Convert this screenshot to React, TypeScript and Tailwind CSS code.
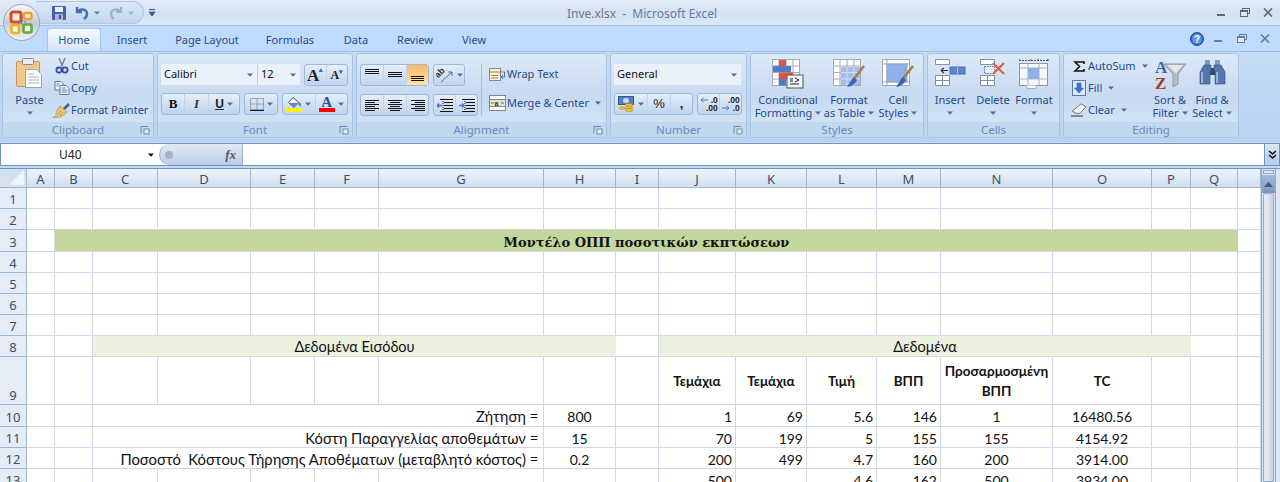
import React from "react";

const Caret = ({ c = "#4d6f9f", cls = "" }: { c?: string; cls?: string }) => (
  <svg width="6" height="4" viewBox="0 0 6 4" className={cls}><path d="M0 0.5h6L3 3.8z" fill={c} /></svg>
);

const BtnGroup = ({ w, children }: { w: string; children: React.ReactNode }) => (
  <div className={`${w} h-[22px] flex items-center rounded-[3px] border border-[#9fbad9] bg-gradient-to-b from-[#e4eefb] to-[#c0d4ec]`}>{children}</div>
);

const Cellb = ({ w, children, active }: { w: string; children: React.ReactNode; active?: boolean }) => (
  <div className={`${w} h-full flex items-center justify-center gap-[3px] border-r border-[#c3d3e7] last:border-r-0 ${active ? "bg-gradient-to-b from-[#f9b96b] to-[#ffe6a5]" : ""}`}>{children}</div>
);

const Launcher = () => (
  <svg width="10" height="10" viewBox="0 0 10 10" className="mr-[3px]">
    <path d="M1 8.5V1.5h7" fill="none" stroke="#6d89ad" />
    <rect x="4" y="4" width="5" height="5" fill="#e6eef9" stroke="#6d89ad" />
  </svg>
);

const Group = ({ w, label, launcher, children, cls = "" }: { w: string; label: string; launcher?: boolean; children: React.ReactNode; cls?: string }) => (
  <div className={`${w} h-[85px] rounded-[3px] border border-[#a9c3e2] flex flex-col overflow-hidden bg-gradient-to-b from-[#dde9f8] via-[#c7daf1] to-[#d9e7f8]`}>
    <div className={`h-[68px] ${cls}`}>{children}</div>
    <div className="h-[15px] bg-[#c1d8f0] flex items-center relative">
      <div className="flex-1 text-center text-[11.5px] leading-[15px] text-[#6c8db8]">{label}</div>
      {launcher && <div className="absolute right-0 top-[3px]"><Launcher /></div>}
    </div>
  </div>
);

const Big = ({ w, icon, l1, l2, arrow = true }: { w: string; icon: React.ReactNode; l1: string; l2?: string; arrow?: boolean }) => (
  <div className={`${w} flex flex-col items-center pt-[5px] text-[11px] leading-[13px] text-[#1f4a8c] whitespace-nowrap`}>
    <div className="h-[32px] flex items-start justify-center">{icon}</div>
    <div className="mt-[2px]">{l1}</div>
    <div className="flex items-center justify-center gap-[3px] h-[13px]">
      {l2 && <span>{l2}</span>}
      {arrow && <Caret />}
    </div>
  </div>
);

const Small = ({ icon, text, caret, cls = "" }: { icon: React.ReactNode; text: string; caret?: boolean; cls?: string }) => (
  <div className={`h-[22px] flex items-center text-[11px] text-[#1f4a8c] whitespace-nowrap ${cls}`}>
    <div className="w-[19px] flex justify-center">{icon}</div>
    <span>{text}</span>
    {caret && <Caret cls="ml-[6px]" />}
  </div>
);

const Lines = ({ ys, widths, x }: { ys: number[]; widths: number[]; x: number[] }) => (
  <svg width="16" height="14" viewBox="0 0 16 14">
    {ys.map((y, i) => <rect key={i} x={x[i]} y={y} width={widths[i]} height="1" fill="#111" />)}
  </svg>
);

const CutIcon = () => (
  <svg width="14" height="16" viewBox="0 0 14 16">
    <path d="M4 0l3.5 8.5M10 0L6.5 8.5" stroke="#7d8aa0" strokeWidth="1.6" fill="none" />
    <circle cx="4" cy="12" r="2.6" fill="none" stroke="#2c4f96" strokeWidth="1.7" />
    <circle cx="10" cy="12" r="2.6" fill="none" stroke="#2c4f96" strokeWidth="1.7" />
  </svg>
);
const CopyIcon = () => (
  <svg width="16" height="14" viewBox="0 0 16 14">
    <path d="M1 .5h6l2 2V9H1z" fill="#f3f6fb" stroke="#5c77a5" />
    <path d="M6 4.5h6l3 3v6H6z" fill="#fff" stroke="#5c77a5" />
    <path d="M7.5 7h4M7.5 9h6M7.5 11h6M2.5 3h3M2.5 5h2" stroke="#5c77a5" />
  </svg>
);
const BrushIcon = () => (
  <svg width="17" height="15" viewBox="0 0 17 15">
    <path d="M10 5l5-5 2 2-5 5z" fill="#48618f" />
    <path d="M7 3l7 6-4 3.5c-3 2-6 2.5-10 2 3-1 3.5-2 3-3.5C3 9 4.500 6 7 3z" fill="#e6c977" stroke="#a5872e" strokeWidth=".6" />
    <path d="M4.500 12L8 7.500M7 13l3-4" stroke="#a5872e" strokeWidth=".7" />
  </svg>
);
const PasteIcon = () => (
  <svg width="27" height="31" viewBox="0 0 27 31">
    <rect x=".5" y="3.500" width="23" height="25" rx="1.500" fill="#f0c887" stroke="#c2965a" />
    <rect x="6.500" y=".5" width="11" height="6" rx="1" fill="#e8ebef" stroke="#848b96" />
    <path d="M9.500 11.500h11l5 5v13h-16z" fill="#fff" stroke="#94a3b8" />
    <path d="M12 16h6M12 19h11M12 22h11M12 25h11" stroke="#a4b0c2" />
  </svg>
);
const GridIco = ({ children }: { children?: React.ReactNode }) => (
  <svg width="32" height="30" viewBox="0 0 32 30">
    <rect x=".5" y=".5" width="27" height="26" fill="#fff" stroke="#a1aab7" />
    <path d="M7 .5v26M14 .5v26M21 .5v26M.5 7h27M.5 13.500h27M.5 20h27" stroke="#a1aab7" />
    {children}
  </svg>
);
const CondIcon = () => (
  <GridIco>
    <rect x="7" y="1" width="7" height="6" fill="#e2543f" />
    <rect x="1" y="7" width="18" height="6" fill="#4f7ac8" />
    <rect x="7" y="13.500" width="14" height="6.500" fill="#e2543f" />
    <rect x="7" y="20" width="7" height="6.500" fill="#4f7ac8" />
    <rect x="15" y="16" width="16" height="13" fill="#f4f4f4" stroke="#555" />
    <path d="M18 20h3M18 22h3M23 19l4 2-4 2M18 25h9" stroke="#222" fill="none" />
  </GridIco>
);
const Brush2 = () => (
  <>
    <path d="M31 7L20 21" stroke="#a87f45" strokeWidth="2.600" />
    <path d="M21 18l3 3c-2 4-6 7-10 7 2-2 3-6 7-10z" fill="#3e66b8" />
  </>
);
const TableIcon = () => (
  <GridIco>
    <rect x="8" y="8" width="19" height="18" fill="#a4bdea" />
    <path d="M14 8v18M21 8v18M8 13.500h19M8 20h19" stroke="#d3dff3" />
    <Brush2 />
  </GridIco>
);
const StylesIcon = () => (
  <svg width="32" height="30" viewBox="0 0 32 30">
    <rect x=".5" y=".5" width="27" height="26" fill="#fff" stroke="#a1aab7" />
    <rect x="5" y="5" width="20" height="18" fill="#8fb0ea" stroke="#8aa0c8" />
    <path d="M5 .5v26M.5 5h27M.5 23h27" stroke="#a1aab7" />
    <Brush2 />
  </svg>
);
const InsertIcon = () => (
  <svg width="31" height="28" viewBox="0 0 31 28">
    <path d="M.5 .5h14v5H.5zM.5 16.500h14v10H.5zM7.500 16.500v10M.5 21.500h14" fill="#fff" stroke="#8390a3" />
    <rect x="15" y="8" width="15" height="7" fill="#5f86cf" stroke="#4a6cab" />
    <path d="M22.500 8v7" stroke="#a9c0ea" />
    <path d="M13 11.500H6M6 11.500l3-2.500M6 11.500l3 2.500" stroke="#333" fill="none" strokeWidth="1.100" />
  </svg>
);
const DeleteIcon = () => (
  <svg width="26" height="28" viewBox="0 0 26 28">
    <path d="M.5 .5h14v5H.5zM.5 16.500h14v10H.5zM7.500 16.500v10M.5 21.500h14" fill="#fff" stroke="#8390a3" />
    <rect x="4.500" y="7.500" width="10" height="7" fill="#e6eef9" stroke="#667a99" strokeDasharray="1.500 1" />
    <path d="M13 4l11 11M24 4L13 15" stroke="#e55a3c" strokeWidth="2" />
  </svg>
);
const FormatIcon = () => (
  <svg width="30" height="30" viewBox="0 0 30 30">
    <path d="M0 1.500h29M0 0v3M29 0v3M12 0v3M19 0v3" stroke="#555" strokeDasharray="2 1" />
    <rect x=".5" y="4.500" width="28" height="22" fill="#f6f8fb" stroke="#8a96a8" />
    <path d="M9 4.500v22M20 4.500v22M.5 9h28M.5 20h28" stroke="#a8b3c2" />
    <rect x="9" y="9" width="11" height="11" fill="#8fb0ea" />
    <path d="M8 26.500v3h9v-3" fill="#fff" stroke="#a8b3c2" />
  </svg>
);
const SigmaIcon = () => (
  <svg width="12" height="11" viewBox="0 0 12 11"><path d="M11 3V1H2l4.500 4.500L2 10h9V8" fill="none" stroke="#111" strokeWidth="1.600" /></svg>
);
const FillIcon = () => (
  <svg width="14" height="16" viewBox="0 0 14 16">
    <rect x=".5" y=".5" width="13" height="15" fill="#dbe7f8" stroke="#5779b5" />
    <path d="M5 3h4v5h2.500L7 13 2.500 8H5z" fill="#3f74cf" stroke="#2b529d" strokeWidth=".5" />
  </svg>
);
const EraserIcon = () => (
  <svg width="16" height="14" viewBox="0 0 16 14">
    <path d="M10 .8l5 3-6 6.500H4.500L1.500 8z" fill="#f3f3f3" stroke="#777" />
    <path d="M1.500 8l3 2.300" stroke="#777" />
    <path d="M0 13h12" stroke="#333" />
  </svg>
);
const SortIcon = () => (
  <svg width="31" height="31" viewBox="0 0 31 31">
    <path d="M9 5h22l-8 10v10l-5 3V15z" fill="#b9bec6" stroke="#8f959f" />
    <path d="M12 6h16l-7 8z" fill="#e6e8ec" />
    <text x="0" y="14" fontSize="17" fontWeight="700" fontFamily="'Liberation Serif', serif" fill="#3f64ad">A</text>
    <text x="0" y="30" fontSize="17" fontWeight="700" fontFamily="'Liberation Serif', serif" fill="#a33b32">Z</text>
  </svg>
);
const BinoIcon = () => (
  <svg width="27" height="27" viewBox="0 0 27 27">
    <rect x="6" y="1" width="5" height="6" rx="1" fill="#7d9bc4" />
    <rect x="16" y="1" width="5" height="6" rx="1" fill="#7d9bc4" />
    <rect x="11" y="9" width="5" height="7" fill="#33496d" />
    <path d="M5 6h7v6h-1v13H1V13z" fill="#5578ac" stroke="#2f4b75" strokeWidth=".6" />
    <path d="M15 6h7l4 7v12H16V12h-1z" fill="#5578ac" stroke="#2f4b75" strokeWidth=".6" />
    <path d="M3 13v11M18 13v11" stroke="#b4cae6" strokeWidth="1.500" />
  </svg>
);
const WrapIcon = () => (
  <svg width="17" height="16" viewBox="0 0 17 16">
    <rect x=".5" y="2.500" width="11" height="12" fill="#fdf3dd" stroke="#7f8794" />
    <path d="M.5 6h16M2 9.500h7M2 12h7" stroke="#a97b37" />
    <path d="M15.500 6v5h-3M14 9l-2 2 2 2" stroke="#4a6ea9" fill="none" />
  </svg>
);
const MergeIcon = () => (
  <svg width="17" height="16" viewBox="0 0 17 16">
    <rect x=".5" y=".5" width="16" height="15" fill="#fff" stroke="#7f8794" />
    <rect x=".5" y="4.500" width="16" height="7" fill="#e8e2cf" stroke="#7f8794" />
    <path d="M2 8h3M15 8h-3" stroke="#4a6ea9" />
    <text x="5.500" y="10.500" fontSize="7" fontWeight="700" fontFamily="'Liberation Sans', sans-serif" fill="#333">a</text>
  </svg>
);
const OrientIcon = () => (
  <svg width="18" height="15" viewBox="0 0 18 15">
    <text x="0" y="8" fontSize="9" fontWeight="700" fontFamily="'Liberation Sans', sans-serif" fill="#333" transform="rotate(-45 4 7)">ab</text>
    <path d="M5 14L16 4M16 4h-4M16 4v4" stroke="#4a6ea9" fill="none" />
  </svg>
);
const IndentIcon = ({ flip }: { flip?: boolean }) => (
  <svg width="16" height="14" viewBox="0 0 16 14">
    <path d="M3 1.500h13M7 4.500h9M7 7.500h9M7 10.500h9M3 13.500h13" stroke="#111" />
    <path d="M6 1v13" stroke="#111" strokeDasharray="1 1" />
    {flip
      ? <path d="M0 7.500h5M3 5.500l2 2-2 2" stroke="#3f74cf" fill="none" strokeWidth="1.400" />
      : <path d="M5 7.500H0M2 5.500l-2 2 2 2" stroke="#3f74cf" fill="none" strokeWidth="1.400" />}
  </svg>
);
const MoneyIcon = () => (
  <svg width="17" height="16" viewBox="0 0 17 16">
    <rect x=".5" y=".5" width="15" height="8" fill="#567fc0" stroke="#35588f" />
    <ellipse cx="8" cy="4.500" rx="3" ry="2.500" fill="#c9d9f0" />
    <ellipse cx="11" cy="9" rx="4" ry="1.500" fill="#f0c33c" stroke="#a97f10" strokeWidth=".5" />
    <ellipse cx="11" cy="11.500" rx="4" ry="1.500" fill="#f0c33c" stroke="#a97f10" strokeWidth=".5" />
    <ellipse cx="11" cy="14" rx="4" ry="1.500" fill="#f0c33c" stroke="#a97f10" strokeWidth=".5" />
    <ellipse cx="4" cy="12" rx="3" ry="1.300" fill="#f0c33c" stroke="#a97f10" strokeWidth=".5" />
  </svg>
);
const DecIcon = ({ inc }: { inc?: boolean }) => (
  <div className="relative w-[18px] h-[16px] text-[8.5px] font-bold leading-[8px] text-[#222] font-['Liberation_Sans',sans-serif] tracking-[0px]">
    {inc ? (
      <>
        <div className="text-right">.00</div>
        <div className="text-right">.0</div>
        <svg width="8" height="6" viewBox="0 0 8 6" className="absolute left-0 top-[9px]"><path d="M0 3h7M4.500 .8L7 3 4.500 5.200" stroke="#3f74cf" fill="none" /></svg>
      </>
    ) : (
      <>
        <div className="text-right">.0</div>
        <div className="text-right">.00</div>
        <svg width="8" height="6" viewBox="0 0 8 6" className="absolute left-0 top-[1px]"><path d="M8 3H1M3.500 .8L1 3l2.500 2.200" stroke="#3f74cf" fill="none" /></svg>
      </>
    )}
  </div>
);

const OfficeButton = () => (
  <div className="absolute left-[3px] top-[4px] w-[37px] h-[37px] rounded-full border border-[#9aa6b6] bg-gradient-to-b from-[#f8f9fb] via-[#c6ccd6] to-[#eef1f5] flex items-center justify-center">
    <svg width="25" height="25" viewBox="0 0 25 25">
      <rect x="2" y="2" width="10" height="10" rx="2" fill="#fff3e6" stroke="#dc4a26" strokeWidth="3" />
      <rect x="15" y="3" width="7.500" height="6" rx="1.500" fill="#fff3e6" stroke="#f0a12a" strokeWidth="2.400" />
      <rect x="2.500" y="15" width="7.500" height="8" rx="1.500" fill="#fff3e6" stroke="#f2b01f" strokeWidth="2.600" />
      <rect x="14.500" y="14.500" width="8" height="8" rx="1.500" fill="#eef6e2" stroke="#69a83c" strokeWidth="2.600" />
      <path d="M12.500 6.500h1.600v1.600h-1.600zM12.500 10h1.600v1.600h-1.600zM15.500 11h1.600v1.600h-1.600zM12 13h1.600v1.600H12zM9 12.800h1.600v1.600H9z" fill="#4a83c9" />
    </svg>
  </div>
);

const WinCtl = ({ c = "#5a6a80" }: { c?: string }) => (
  <div className="flex items-center">
    <svg width="9" height="3" viewBox="0 0 9 3" className="mr-[14px] mt-[5px]"><rect width="8" height="2" fill={c} /></svg>
    <svg width="10" height="9" viewBox="0 0 10 9" className="mr-[13px]">
      <rect x="2.500" y=".5" width="7" height="5" fill="none" stroke={c} />
      <rect x=".5" y="2.500" width="7" height="6" fill="#dce8f6" stroke={c} />
      <rect x=".5" y="2.500" width="7" height="1.500" fill={c} />
    </svg>
    <svg width="10" height="9" viewBox="0 0 10 9"><path d="M1 .5l8 8M9 .5l-8 8" stroke={c} strokeWidth="1.700" /></svg>
  </div>
);

const widthsCols = ["A", "B", "C", "D", "E", "F", "G", "H", "I", "J", "K", "L", "M", "N", "O", "P", "Q", ""];

const HeadCol = ({ t }: { t: string }) => (
  <div className="border-r border-b border-[#9eb6ce] bg-gradient-to-b from-[#eef3fa] to-[#d3dfee] text-center text-[13px] leading-[20px] text-[#3c4f68]">{t}</div>
);
const RowNum = ({ n }: { n: number }) => (
  <div className="border-r border-b border-[#9eb6ce] bg-[#e4ecf7] text-center text-[13px] text-[#3c4f68] flex items-end justify-center leading-[17px]">{n}</div>
);
const C = ({ cls = "", children }: { cls?: string; children?: React.ReactNode }) => (
  <div className={`border-r border-b border-[#d0d7e5] text-[14.5px] text-[#111] whitespace-pre overflow-hidden flex items-center font-['Lato','Noto_Sans',sans-serif] ${cls}`}>{children}</div>
);
const Blank = ({ n = 18 }: { n?: number }) => <>{Array.from({ length: n }, (_, i) => <C key={i} />)}</>;
const Num = ({ t }: { t?: string }) => <C cls="justify-end pr-[3px] pt-[2px] !text-[14px]">{t}</C>;
const Ctr = ({ t }: { t?: string }) => <C cls="justify-center pt-[2px] !text-[14px]">{t}</C>;
const Hd = ({ t }: { t?: string }) => <C cls="justify-center font-bold !text-[13.5px] text-center !whitespace-normal leading-[20px]"><span className="block">{t}</span></C>;

const dataRow = (label: string, h: string, d: string[]) => (
  <>
    <C /><C />
    <C cls="col-span-5 justify-end pr-[1px] pt-[2px] !text-[14.75px]">{label}</C>
    <Ctr t={h} />
    <C />
    <Num t={d[0]} /><Num t={d[1]} /><Num t={d[2]} /><Num t={d[3]} />
    <Ctr t={d[4]} /><Ctr t={d[5]} />
    <C /><C /><C />
  </>
);

export default function App() {
  return (
    <div className="relative w-[1280px] h-[482px] overflow-hidden bg-[#c5dbf5] font-['Noto_Sans','Open_Sans',sans-serif]">
      {/* title bar */}
      <div className="h-[26px] border-b border-[#a9c5e6] bg-gradient-to-b from-[#e3ecf8] via-[#d4e2f4] to-[#dbe7f7] flex items-center">
        <div className="ml-[36px] w-[108px] h-[23px] rounded-r-[12px] border border-l-0 border-[#b4c8e2] bg-gradient-to-b from-[#dce8f7] to-[#c3d6ee] flex items-center pl-[16px]">
          <svg width="14" height="14" viewBox="0 0 14 14">
            <rect width="14" height="14" rx="1" fill="#4b5fb0" />
            <rect x="3" y="1" width="8" height="5" fill="#eef1f7" />
            <rect x="3" y="8" width="8" height="6" fill="#aeb7cc" />
            <rect x="7" y="9" width="2" height="4" fill="#3f4f92" />
          </svg>
          <svg width="14" height="14" viewBox="0 0 14 14" className="ml-[9px]">
            <path d="M2 1v5h5M2.500 5.500C6 2 12 3 12 8c0 2-1 3.500-3 5" fill="none" stroke="#3c6ec0" strokeWidth="2.400" />
          </svg>
          <Caret c="#5f7da5" cls="ml-[5px]" />
          <svg width="14" height="14" viewBox="0 0 14 14" className="ml-[9px]">
            <path d="M12 1v5H7M11.500 5.500C8 2 2 3 2 8c0 2 1 3.500 3 5" fill="none" stroke="#9fb2c9" strokeWidth="2.200" />
          </svg>
          <Caret c="#a3b5cb" cls="ml-[5px]" />
        </div>
        <svg width="7" height="8" viewBox="0 0 7 8" className="ml-[5px]"><path d="M0 .5h6M0 3h6L3 7z" stroke="#3f5f8e" fill="#3f5f8e" /></svg>
        <div className="ml-[410px] mt-[3px] w-[152px] flex justify-center text-[12px] whitespace-pre text-[#5f7da5]"><span className="text-[#6d7683]">Inve.xlsx</span><span>  -  Microsoft Excel</span></div>
        <div className="flex-1 flex justify-end pr-[7px]"><WinCtl /></div>
      </div>
      {/* tabs */}
      <div className="h-[25px] bg-[#bfdbff] flex items-end text-[11px] text-[#264e88] whitespace-nowrap">
        <div className="ml-[47px] w-[54px] h-[23px] rounded-t-[3px] border border-b-0 border-[#a9c5e6] bg-gradient-to-b from-[#f6faff] to-[#d4e4f8] text-center leading-[21px]">Home</div>
        <div className="ml-[14px] w-[34px] h-[23px] leading-[23px] text-center">Insert</div>
        <div className="ml-[25px] w-[66px] h-[23px] leading-[23px] text-center">Page Layout</div>
        <div className="ml-[25px] w-[50px] h-[23px] leading-[23px] text-center">Formulas</div>
        <div className="ml-[27px] w-[28px] h-[23px] leading-[23px] text-center">Data</div>
        <div className="ml-[25px] w-[40px] h-[23px] leading-[23px] text-center">Review</div>
        <div className="ml-[25px] w-[28px] h-[23px] leading-[23px] text-center">View</div>
        <div className="flex-1 flex justify-end items-center h-full pr-[10px]">
          <svg width="14" height="14" viewBox="0 0 14 14" className="mr-[10px]"><circle cx="7" cy="7" r="6.500" fill="#2f6fd0" stroke="#1c4f9f" /><circle cx="7" cy="7" r="4.800" fill="#fff" opacity=".25" /><text x="7" y="10.500" textAnchor="middle" fontSize="10" fontWeight="700" fontFamily="'Liberation Sans', sans-serif" fill="#fff">?</text></svg>
          <WinCtl c="#6b7c93" />
        </div>
      </div>
      {/* ribbon */}
      <div className="h-[91px] pt-[1px] pl-[2px] flex gap-[3px] border-t border-[#9dbde2] bg-gradient-to-b from-[#c5dcf7] to-[#b9d2f0]">
        <Group w="w-[152px]" label="Clipboard" launcher cls="flex">
          <div className="w-[49px] pl-[4px] flex flex-col items-center pt-[4px] text-[11px] leading-[13px] text-[#1f4a8c]">
            <PasteIcon />
            <div className="mt-[4px]">Paste</div>
            <Caret cls="mt-[5px]" />
          </div>
          <div className="pt-[1px]">
            <Small icon={<CutIcon />} text="Cut" />
            <Small icon={<CopyIcon />} text="Copy" />
            <Small icon={<BrushIcon />} text="Format Painter" cls="text-[10.75px]" />
          </div>
        </Group>
        <Group w="w-[196px]" label="Font" launcher cls="pl-[3px] pt-[10px] flex flex-col gap-[8px]">
          <div className="flex h-[21px]">
            <div className="w-[97px] bg-[#e9f1fb] flex items-center justify-between pl-[3px] pr-[4px] text-[11px] text-[#111] border-r border-[#bcd0e8]">Calibri<Caret /></div>
            <div className="w-[42px] bg-[#e9f1fb] flex items-center justify-between pl-[3px] pr-[4px] text-[11px] text-[#111]">12<Caret /></div>
            <div className="ml-[4px] w-[44px]">
              <BtnGroup w="w-[44px]">
                <Cellb w="w-[22px]"><span className="text-[17px] font-bold font-['Liberation_Serif',serif] text-[#222] leading-none">A<span className="text-[7px] align-top text-[#3f64ad]">▴</span></span></Cellb>
                <Cellb w="w-[21px]"><span className="text-[12px] font-bold font-['Liberation_Serif',serif] text-[#222] leading-none">A<span className="text-[7px] align-top text-[#3f64ad]">▾</span></span></Cellb>
              </BtnGroup>
            </div>
          </div>
          <div className="flex">
            <BtnGroup w="w-[79px]">
              <Cellb w="w-[23px]"><span className="text-[13px] font-bold font-['Liberation_Serif',serif] text-[#111]">B</span></Cellb>
              <Cellb w="w-[24px]"><span className="text-[13px] italic font-bold font-['Liberation_Serif',serif] text-[#333]">I</span></Cellb>
              <Cellb w="w-[30px]"><span className="text-[12px] underline font-bold font-['Liberation_Sans',sans-serif] text-[#222]">U</span><Caret /></Cellb>
            </BtnGroup>
            <div className="ml-[4px]">
              <BtnGroup w="w-[34px]">
                <Cellb w="w-full">
                  <svg width="14" height="13" viewBox="0 0 14 13"><path d="M.5 .5h13v11H.5zM7 .5v11M.5 6h13" fill="none" stroke="#5b6a80" strokeDasharray="1 1" /><path d="M0 12.500h14" stroke="#111" /></svg>
                  <Caret />
                </Cellb>
              </BtnGroup>
            </div>
            <div className="ml-[4px]">
              <BtnGroup w="w-[66px]">
                <Cellb w="w-[33px]">
                  <div className="flex flex-col items-center">
                    <svg width="15" height="11" viewBox="0 0 15 11"><path d="M6 .5l6 5-5 5-5.500-5z" fill="#f2f5f9" stroke="#45577a" /><path d="M12 5c2 1 2.500 3 2 5-1-1-2-2-3-3z" fill="#5a84c4" /><path d="M2.500 6h8l-3.500 4z" fill="#5a84c4" /></svg>
                    <div className="w-[16px] h-[4px] bg-[#fff200]" />
                  </div>
                  <Caret />
                </Cellb>
                <Cellb w="w-[32px]">
                  <div className="flex flex-col items-center">
                    <span className="text-[15px] leading-[11px] font-bold font-['Liberation_Serif',serif] text-[#2a4f96]">A</span>
                    <div className="w-[16px] h-[4px] bg-[#ff0000]" />
                  </div>
                  <Caret />
                </Cellb>
              </BtnGroup>
            </div>
          </div>
        </Group>
        <Group w="w-[251px]" label="Alignment" launcher cls="flex pl-[3px] pt-[10px]">
          <div className="flex flex-col gap-[8px] w-[122px] border-r border-[#a9bdd6] h-[52px]">
            <div className="flex gap-[4px]">
              <BtnGroup w="w-[69px]">
                <Cellb w="w-[23px]"><Lines ys={[1, 3, 5]} widths={[14, 14, 14]} x={[1, 1, 1]} /></Cellb>
                <Cellb w="w-[23px]"><Lines ys={[4, 6, 8]} widths={[14, 14, 14]} x={[1, 1, 1]} /></Cellb>
                <Cellb w="w-[21px]" active><Lines ys={[8, 10, 12]} widths={[13, 13, 13]} x={[1, 1, 1]} /></Cellb>
              </BtnGroup>
              <BtnGroup w="w-[32px]">
                <Cellb w="w-full"><OrientIcon /><Caret /></Cellb>
              </BtnGroup>
            </div>
            <div className="flex gap-[4px]">
              <BtnGroup w="w-[69px]">
                <Cellb w="w-[23px]"><Lines ys={[2, 4, 6, 8, 10, 12]} widths={[14, 10, 14, 10, 14, 10]} x={[1, 1, 1, 1, 1, 1]} /></Cellb>
                <Cellb w="w-[23px]"><Lines ys={[2, 4, 6, 8, 10, 12]} widths={[14, 10, 14, 10, 14, 10]} x={[1, 3, 1, 3, 1, 3]} /></Cellb>
                <Cellb w="w-[21px]"><Lines ys={[2, 4, 6, 8, 10, 12]} widths={[14, 10, 14, 10, 14, 10]} x={[1, 5, 1, 5, 1, 5]} /></Cellb>
              </BtnGroup>
              <BtnGroup w="w-[45px]">
                <Cellb w="w-[23px]"><IndentIcon /></Cellb>
                <Cellb w="w-[21px]"><IndentIcon flip /></Cellb>
              </BtnGroup>
            </div>
          </div>
          <div className="pl-[6px] -mt-[1px] flex flex-col gap-[7px]">
            <Small icon={<WrapIcon />} text="Wrap Text" />
            <Small icon={<MergeIcon />} text="Merge & Center" caret />
          </div>
        </Group>
        <Group w="w-[137px]" label="Number" launcher cls="pl-[3px] pt-[10px] flex flex-col gap-[8px]">
          <div className="w-[127px] h-[21px] bg-[#e9f1fb] flex items-center justify-between pl-[3px] pr-[4px] text-[11px] text-[#111]">General<Caret /></div>
          <div className="flex gap-[4px]">
            <BtnGroup w="w-[79px]">
              <Cellb w="w-[33px]"><MoneyIcon /><Caret /></Cellb>
              <Cellb w="w-[23px]"><span className="text-[13px] text-[#222] font-['Liberation_Sans',sans-serif]">%</span></Cellb>
              <Cellb w="w-[21px]"><span className="text-[13px] font-bold text-[#222] font-['Liberation_Sans',sans-serif]">,</span></Cellb>
            </BtnGroup>
            <BtnGroup w="w-[45px]">
              <Cellb w="w-[23px]"><DecIcon /></Cellb>
              <Cellb w="w-[21px]"><DecIcon inc /></Cellb>
            </BtnGroup>
          </div>
        </Group>
        <Group w="w-[174px]" label="Styles" cls="flex pl-[3px]">
          <Big w="w-[68px]" icon={<CondIcon />} l1="Conditional" l2="Formatting" />
          <Big w="w-[54px]" icon={<TableIcon />} l1="Format" l2="as Table" />
          <Big w="w-[44px]" icon={<StylesIcon />} l1="Cell" l2="Styles" />
        </Group>
        <Group w="w-[133px]" label="Cells" cls="flex pl-[2px]">
          <Big w="w-[40px]" icon={<InsertIcon />} l1="Insert" />
          <Big w="w-[46px]" icon={<DeleteIcon />} l1="Delete" />
          <Big w="w-[36px]" icon={<FormatIcon />} l1="Format" />
        </Group>
        <Group w="w-[176px]" label="Editing" cls="flex">
          <div className="w-[84px] pl-[5px] pt-[1px]">
            <Small icon={<SigmaIcon />} text="AutoSum" caret />
            <Small icon={<FillIcon />} text="Fill" caret />
            <Small icon={<EraserIcon />} text="Clear" caret />
          </div>
          <Big w="w-[44px]" icon={<SortIcon />} l1="Sort &" l2="Filter" />
          <Big w="w-[40px]" icon={<BinoIcon />} l1="Find &" l2="Select" />
        </Group>
      </div>
      {/* formula bar */}
      <div className="h-[26px] bg-[#c5dbf5] pt-[1px]">
        <div className="h-[23px] flex border border-[#6f93bb] bg-white">
          <div className="w-[159px] flex items-center text-[12px] text-[#222] pl-[58px] justify-between pr-[6px]">U40<Caret c="#111" /></div>
          <div className="w-[84px] -ml-[1px] rounded-l-[11px] border-r border-[#6f93bb] border-l border-[#9ab2cf] bg-gradient-to-b from-[#e1eaf6] to-[#b8cde8] flex items-center justify-between pl-[5px] pr-[6px]">
            <div className="w-[8px] h-[8px] rounded-full bg-[#a8b3c2]" />
            <span className="italic font-bold text-[13px] font-['Liberation_Serif',serif] text-[#555]">fx</span>
          </div>
          <div className="flex-1" />
          <div className="w-[15px] border-l border-[#6f93bb] bg-gradient-to-b from-[#d9e6f7] to-[#b3cbe8] flex items-center justify-center">
            <svg width="9" height="10" viewBox="0 0 9 10"><path d="M1 1l3.500 3L8 1M1 5l3.500 3L8 5" fill="none" stroke="#111" strokeWidth="1.500" /></svg>
          </div>
        </div>
      </div>
      {/* sheet */}
      <div className="flex border-t border-[#6f93bb] bg-white h-[314px] overflow-hidden">
        <div className="w-[1261px] grid grid-cols-[27px_28px_38px_65px_93px_64px_64px_165px_72px_43px_77px_71px_70px_64px_112px_99px_39px_47px_23px] grid-rows-[19px_21px_21px_22px_21px_21px_21px_21px_21px_48px_22px_21px_21px_21px]">
          <div className="border-r border-b border-[#9eb6ce] bg-[#d4e1f1] flex items-end justify-end p-[2px]">
            <svg width="15" height="15" viewBox="0 0 15 15"><path d="M15 0v15H0z" fill="#f0f5fb" /></svg>
          </div>
          {widthsCols.map((t, i) => <HeadCol key={i} t={t} />)}
          <RowNum n={1} /><Blank />
          <RowNum n={2} /><Blank />
          <RowNum n={3} />
          <C />
          <C cls="col-span-16 justify-center bg-[#c3d69b] border-r-0 font-bold !font-['DejaVu_Serif','Liberation_Serif',serif] !text-[13px] pt-[4px] text-[#111]">Μοντέλο ΟΠΠ ποσοτικών εκπτώσεων</C>
          <C />
          <RowNum n={4} /><Blank />
          <RowNum n={5} /><Blank />
          <RowNum n={6} /><Blank />
          <RowNum n={7} /><Blank />
          <RowNum n={8} />
          <C /><C />
          <C cls="col-span-6 justify-center bg-[#ebf1de] border-r-0 pt-[2px]">Δεδομένα Εισόδου</C>
          <C />
          <C cls="col-span-7 justify-center bg-[#ebf1de] border-r-0 pt-[2px]">Δεδομένα</C>
          <C /><C />
          <RowNum n={9} />
          <Blank n={9} />
          <Hd t="Τεμάχια" /><Hd t="Τεμάχια" /><Hd t="Τιμή" /><Hd t="ΒΠΠ" /><Hd t="Προσαρμοσμένη ΒΠΠ" /><Hd t="TC" />
          <C /><C /><C />
          <RowNum n={10} />{dataRow("Ζήτηση = ", "800", ["1", "69", "5.6", "146", "1", "16480.56"])}
          <RowNum n={11} />{dataRow("Κόστη Παραγγελίας αποθεμάτων = ", "15", ["70", "199", "5", "155", "155", "4154.92"])}
          <RowNum n={12} />{dataRow("Ποσοστό  Κόστους Τήρησης Αποθέματων (μεταβλητό κόστος) = ", "0.2", ["200", "499", "4.7", "160", "200", "3914.00"])}
          <RowNum n={13} />
          <Blank n={9} />
          <Num t="500" /><Num /><Num t="4.6" /><Num t="162" /><Ctr t="500" /><Ctr t="3934.00" />
          <C /><C /><C />
        </div>
        <div className="w-[15px] border-x border-[#8fa9c9] bg-[#d5e2f3] flex flex-col">
          <div className="h-[4px] mt-[1px] mx-[1px] bg-[#dfe9f6] border border-[#8fa9c9]" />
          <div className="h-[18px] mt-[1px] bg-gradient-to-b from-[#a4bbd8] to-[#7d98bd] flex items-center justify-center">
            <svg width="9" height="5" viewBox="0 0 9 5"><path d="M4.500 0L9 5H0z" fill="#46597a" /></svg>
          </div>
          <div className="flex-1 mx-[1px] rounded-t-[2px] border border-[#9bafc9] bg-gradient-to-r from-[#e6ebf3] via-[#dde3ec] to-[#c3ccd9]" />
        </div>
        <div className="flex-1 bg-[#dbe6f5]" />
      </div>
      <OfficeButton />
    </div>
  );
}
